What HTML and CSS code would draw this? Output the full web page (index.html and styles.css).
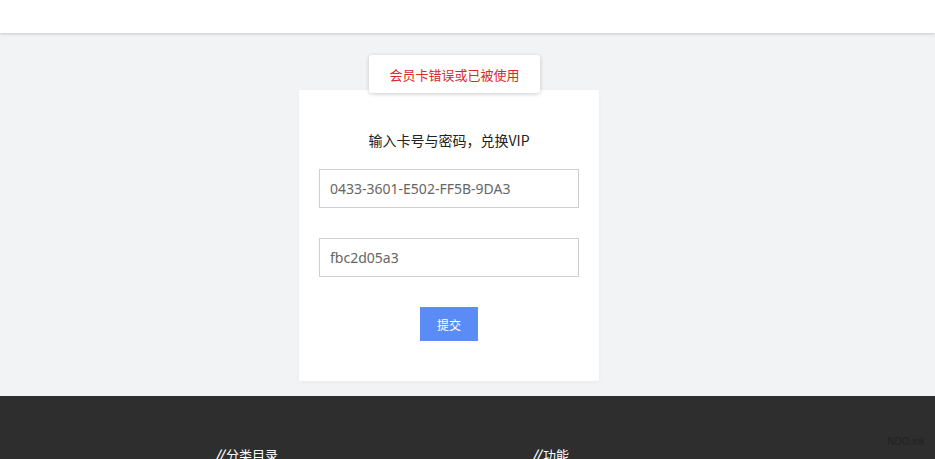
FILE: index.html
```html
<!DOCTYPE html>
<html lang="zh-CN">
<head>
<meta charset="utf-8">
<title>兑换VIP</title>
<link rel="stylesheet" href="styles.css">
</head>
<body>
<header class="topbar"></header>
<main class="main">
  <div class="card-wrap">
    <div class="toast">会员卡错误或已被使用</div>
    <form class="card">
      <p class="card-title">输入卡号与密码，兑换VIP</p>
      <input class="field" type="text" value="0433-3601-E502-FF5B-9DA3">
      <input class="field" type="text" value="fbc2d05a3">
      <button class="submit" type="button">提交</button>
    </form>
  </div>
</main>
<footer class="footer">
  <div class="footer-cols">
    <h3 class="footer-heading"><span class="slashes">//</span>分类目录</h3>
    <h3 class="footer-heading"><span class="slashes">//</span>功能</h3>
  </div>
  <span class="watermark">NDO.ink</span>
</footer>
</body>
</html>
```
FILE: styles.css
```css
* { box-sizing: border-box; }
html, body { margin: 0; padding: 0; }
body {
  font-family: "Noto Sans", "Noto Sans CJK SC", sans-serif;
  background: #f2f3f5;
  color: #333;
  overflow: hidden;
  height: 459px;
}
.topbar {
  height: 33px;
  background: #fff;
  box-shadow: 0 1px 3px rgba(0,0,0,0.18);
  position: relative;
  z-index: 2;
}
.main {
  display: flex;
  justify-content: center;
  padding-top: 57px;
  padding-bottom: 15px;
  padding-right: 37px;
}
.card-wrap {
  position: relative;
  width: 300px;
}
.toast {
  position: absolute;
  top: -35px;
  left: 70px;
  width: 171px;
  height: 38px;
  background: #fff;
  border-radius: 3px;
  box-shadow: 0 1px 4px rgba(0,0,0,0.2);
  color: #d62a2a;
  font-size: 13px;
  display: flex;
  align-items: center;
  justify-content: center;
  font-family: "Noto Sans CJK SC", sans-serif;
  z-index: 3;
}
.card {
  background: #fff;
  padding: 40px 20px 40px;
  display: flex;
  flex-direction: column;
  align-items: center;
  margin: 0;
  box-shadow: 0 1px 4px rgba(0,0,0,0.04);
}
.card-title {
  margin: 0 0 19px;
  font-size: 14px;
  line-height: 20px;
  color: #222;
  font-family: "Noto Sans CJK SC", sans-serif;
}
.field {
  width: 260px;
  height: 39px;
  border: 1px solid #cfcfcf;
  padding: 0 10px;
  font-size: 14px;
  color: #666;
  font-family: "Noto Sans", "Noto Sans CJK SC", sans-serif;
  margin: 0 0 30px;
  outline: none;
  border-radius: 0;
}
.submit {
  width: 58px;
  height: 34px;
  background: #5b8cf5;
  color: #fff;
  border: none;
  font-size: 12px;
  font-family: "Noto Sans CJK SC", sans-serif;
  padding: 0;
  border-radius: 0;
}
.footer {
  background: #2e2e2e;
  height: 70px;
  position: relative;
  padding-top: 50px;
}
.footer-cols {
  display: grid;
  grid-template-columns: 317px auto;
  margin-left: 215px;
}
.footer-heading {
  margin: 0;
  font-size: 13px;
  font-weight: normal;
  color: #fff;
  line-height: 18px;
  font-family: "Noto Sans CJK SC", sans-serif;
}
.slashes {
  font-style: italic;
  font-weight: bold;
  margin-right: 3px;
  letter-spacing: -1px;
}
.watermark {
  position: absolute;
  right: 10px;
  top: 40px;
  font-size: 10px;
  color: #222;
  font-family: "Liberation Sans", sans-serif;
}
```
